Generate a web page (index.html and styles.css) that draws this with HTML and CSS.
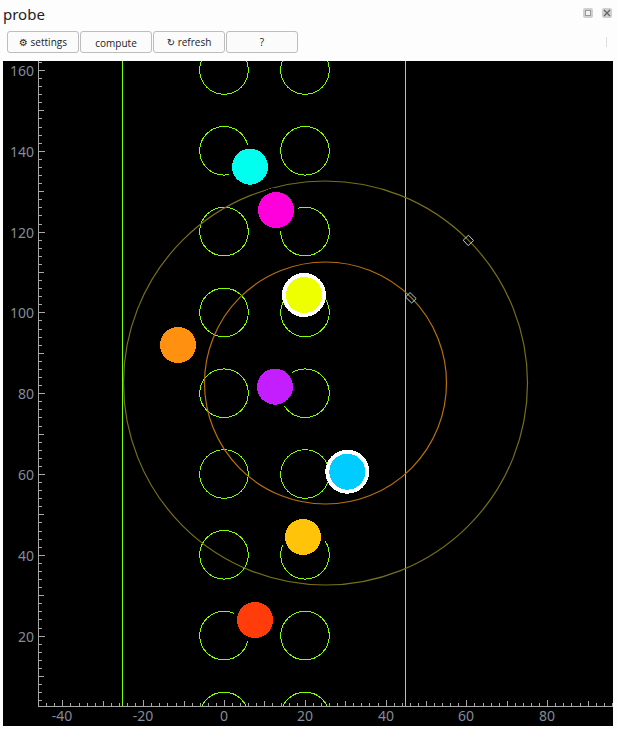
FILE: index.html
```html
<!DOCTYPE html>
<html lang="en">
<head>
    <meta charset="UTF-8">
    <meta name="viewport" content="width=device-width, initial-scale=1.0">
    <title>probe</title>
    <link rel="stylesheet" href="styles.css">
</head>
<body>
    <header class="titlebar">
        <span class="title">probe</span>
        <div class="window-buttons">
            <span class="window-button"><span class="restore-mark"></span></span>
            <span class="window-button close-mark">
                <svg width="10" height="10" viewBox="0 0 10 10"><path d="M2 2 8 8M8 2 2 8"/></svg>
            </span>
        </div>
    </header>
    <div class="toolbar">
        <button type="button"><span class="glyph">⚙</span> settings</button>
        <button type="button" class="low-label">compute</button>
        <button type="button"><span class="glyph">↻</span> refresh</button>
        <button type="button">?</button>
        <span class="toolbar-end"></span>
    </div>
    <svg id="plot" class="plot" width="610" height="665" viewBox="3 61 610 665">
        <defs>
            <clipPath id="plot-area"><rect x="39" y="61" width="574" height="645"/></clipPath>
        </defs>
        <g id="grid" clip-path="url(#plot-area)"></g>
        <circle class="ring-outer" cx="325.5" cy="383" r="202"/>
        <circle class="ring-inner" cx="325.5" cy="383" r="121"/>
        <polygon class="handle" points="468.5,235.2 473.5,240.5 468.2,245.6 463.2,240.2"/>
        <polygon class="handle" points="410,292.6 416.2,298.6 411.7,303 405.5,297"/>
        <g id="dots"></g>
        <g id="axes"></g>
    </svg>
    <script src="plot.js"></script>
</body>
</html>
```
FILE: styles.css
```css
html, body {
    margin: 0;
    height: 100%;
    background-color: #fdfdfd;
    overflow: hidden;
}
.titlebar {
    display: flex;
    justify-content: space-between;
    height: 28px;
    padding: 0 6px 0 3px;
}
.title {
    font-family: "Noto Sans", sans-serif;
    font-size: 15px;
    line-height: 28px;
    color: #222;
}
.window-buttons {
    display: flex;
    gap: 9px;
    padding-top: 8px;
}
.window-button {
    display: flex;
    align-items: center;
    justify-content: center;
    width: 10px;
    height: 10px;
    border-radius: 2px;
    background-color: #cfcfcf;
}
.restore-mark {
    width: 4px;
    height: 4px;
    border: 1px solid #999;
    background-color: #f2f2f2;
}
.close-mark path {
    stroke: #666;
    stroke-width: 1.4;
    fill: none;
}
.toolbar {
    display: flex;
    align-items: flex-start;
    gap: 1px;
    height: 33px;
    padding: 3px 0 0 7px;
    box-sizing: border-box;
}
.toolbar button {
    width: 72px;
    height: 22px;
    padding: 0 0 1px;
    border: 1px solid #bdbdbd;
    border-radius: 3px;
    background-color: #fbfbfb;
    font-family: "Open Sans", sans-serif;
    font-size: 10px;
    color: #222;
}
.toolbar .low-label {
    padding: 1px 0 0;
}
.glyph {
    font-family: "DejaVu Sans", sans-serif;
}
.toolbar-end {
    width: 1px;
    height: 10px;
    margin: 6px 11px 0 auto;
    background-color: #ddd;
}
.plot {
    display: block;
    margin-left: 3px;
    background-color: #000;
}
.grid-circle, .grid-line {
    fill: none;
    stroke: #7fff00;
    stroke-width: 1;
    shape-rendering: crispEdges;
}
.ring-outer {
    fill: none;
    stroke: #77701a;
    stroke-width: 1.2;
}
.ring-inner {
    fill: none;
    stroke: #b8700f;
    stroke-width: 1.2;
}
.handle {
    fill: none;
    stroke: #a4dcdc;
    stroke-width: 1;
}
.dot {
    shape-rendering: crispEdges;
}
.halo {
    fill: #000;
    shape-rendering: crispEdges;
}
.halo-selected {
    fill: #fff;
    shape-rendering: crispEdges;
}
.axis {
    stroke: #a8a8a8;
    stroke-width: 1;
    shape-rendering: crispEdges;
}
.axis-label {
    font-family: "Noto Sans", sans-serif;
    font-size: 14px;
    fill: #808c9a;
}
```
FILE: plot.js
```js
const NS = 'http://www.w3.org/2000/svg';
const SCALE = 4.04;

function px(v) { return 224 + v * SCALE; }
function py(v) { return 70 + (160 - v) * SCALE; }

function add(parent, tag, attrs, text) {
    const el = document.createElementNS(NS, tag);
    for (const key in attrs) {
        el.setAttribute(key, attrs[key]);
    }
    if (text !== undefined) el.textContent = text;
    document.getElementById(parent).appendChild(el);
}

// lane markers
for (let v = 0; v <= 160; v += 20) {
    add('grid', 'circle', { class: 'grid-circle', cx: 224, cy: py(v), r: 24.3 });
    add('grid', 'circle', { class: 'grid-circle', cx: 305, cy: py(v), r: 24.3 });
}
add('grid', 'line', { class: 'grid-line', x1: 122.5, y1: 61, x2: 122.5, y2: 706 });
add('grid', 'line', { class: 'grid-line', x1: 405.5, y1: 61, x2: 405.5, y2: 706 });

// probes: x, y, colour, selected
const dots = [
    [250, 166.7, '#00ffee'],
    [276, 210, '#ff00dd'],
    [304, 295, '#eeff00', true],
    [178, 345, '#ff9010'],
    [275, 386.7, '#c41eff'],
    [347.3, 471.7, '#00ccff', true],
    [303, 537, '#ffc40a'],
    [255, 620, '#ff3c0a'],
];
dots.forEach(([x, y, color, selected]) => {
    add('dots', 'circle', { class: selected ? 'halo-selected' : 'halo', cx: x, cy: y, r: 22 });
});
dots.forEach(([x, y, color]) => {
    add('dots', 'circle', { class: 'dot', cx: x, cy: y, r: 18, fill: color });
});

// axes
add('axes', 'line', { class: 'axis', x1: 38.5, y1: 61, x2: 38.5, y2: 706.5 });
add('axes', 'line', { class: 'axis', x1: 38.5, y1: 706.5, x2: 613, y2: 706.5 });

function tickLength(v) {
    if (v % 20 === 0) return 6;
    return v % 10 === 0 ? 5 : 3;
}

for (let v = -46; v <= 96; v += 2) {
    const x = Math.round(px(v)) + 0.5;
    add('axes', 'line', { class: 'axis', x1: x, y1: 706, x2: x, y2: 706 - tickLength(v) });
    if (v % 20 === 0) {
        add('axes', 'text', { class: 'axis-label', x: x - 0.5, y: 721, 'text-anchor': 'middle' }, v);
    }
}
for (let v = 4; v <= 162; v += 2) {
    const y = Math.round(py(v)) + 0.5;
    add('axes', 'line', { class: 'axis', x1: 39, y1: y, x2: 39 + tickLength(v), y2: y });
    if (v % 20 === 0) {
        add('axes', 'text', { class: 'axis-label', x: 34, y: y + 5, 'text-anchor': 'end' }, v);
    }
}
```
